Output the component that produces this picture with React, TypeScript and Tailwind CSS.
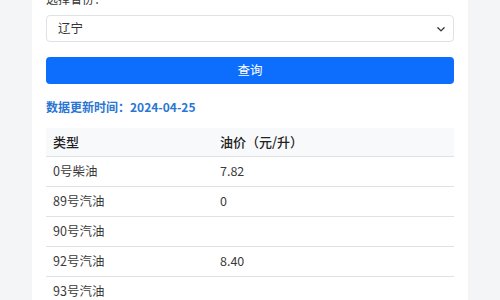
import React from "react";

const rows: [string, string][] = [
  ["0号柴油", "7.82"],
  ["89号汽油", "0"],
  ["90号汽油", ""],
  ["92号汽油", "8.40"],
  ["93号汽油", ""],
];

export default function App() {
  return (
    <div
      className="w-[500px] h-[300px] overflow-hidden bg-[#f4f5f7] flex justify-center"
      style={{ fontFamily: '"Noto Sans CJK SC", "Liberation Sans", sans-serif' }}
    >
      <div className="w-[436px] bg-white px-[14px] flex flex-col shrink-0">
        <div className="shrink-0 -mt-[10px] h-[18px] leading-[18px] text-[12px] text-[#333]">选择省份：</div>
        <div className="shrink-0 mt-[7px] h-[27px] border border-[#dee2e6] rounded-[4px] flex items-center justify-between pl-[11px] pr-[7px] text-[12.5px] text-[#333]">
          <span>辽宁</span>
          <svg width="10" height="10" viewBox="0 0 16 16">
            <path d="M3 6l5 5 5-5" fill="none" stroke="#343a40" strokeWidth="2.2" strokeLinecap="round" strokeLinejoin="round" />
          </svg>
        </div>
        <div className="shrink-0 mt-[15px] h-[27px] rounded-[4px] bg-[#0d6efd] text-white text-[12.5px] flex items-center justify-center">
          查询
        </div>
        <div className="shrink-0 mt-[14px] h-[18px] leading-[18px] text-[12px] font-bold text-[#2a76d2]">
          数据更新时间：2024-04-25
        </div>
        <div className="shrink-0 mt-[12px] flex flex-col text-[12.5px] text-[#3a3a3a]">
          <div className="shrink-0 h-[29px] bg-[#f8f9fa] border-b border-[#dee2e6] flex items-center font-medium text-[13px] text-[#222]">
            <div className="w-[167px] pl-[7px]">类型</div>
            <div className="pl-[7px]">油价（元/升）</div>
          </div>
          {rows.map(([t, p]) => (
            <div key={t} className="shrink-0 h-[30px] border-b border-[#dee2e6] flex items-center">
              <div className="w-[167px] pl-[7px]">{t}</div>
              <div className="pl-[7px]">{p}</div>
            </div>
          ))}
        </div>
      </div>
    </div>
  );
}
